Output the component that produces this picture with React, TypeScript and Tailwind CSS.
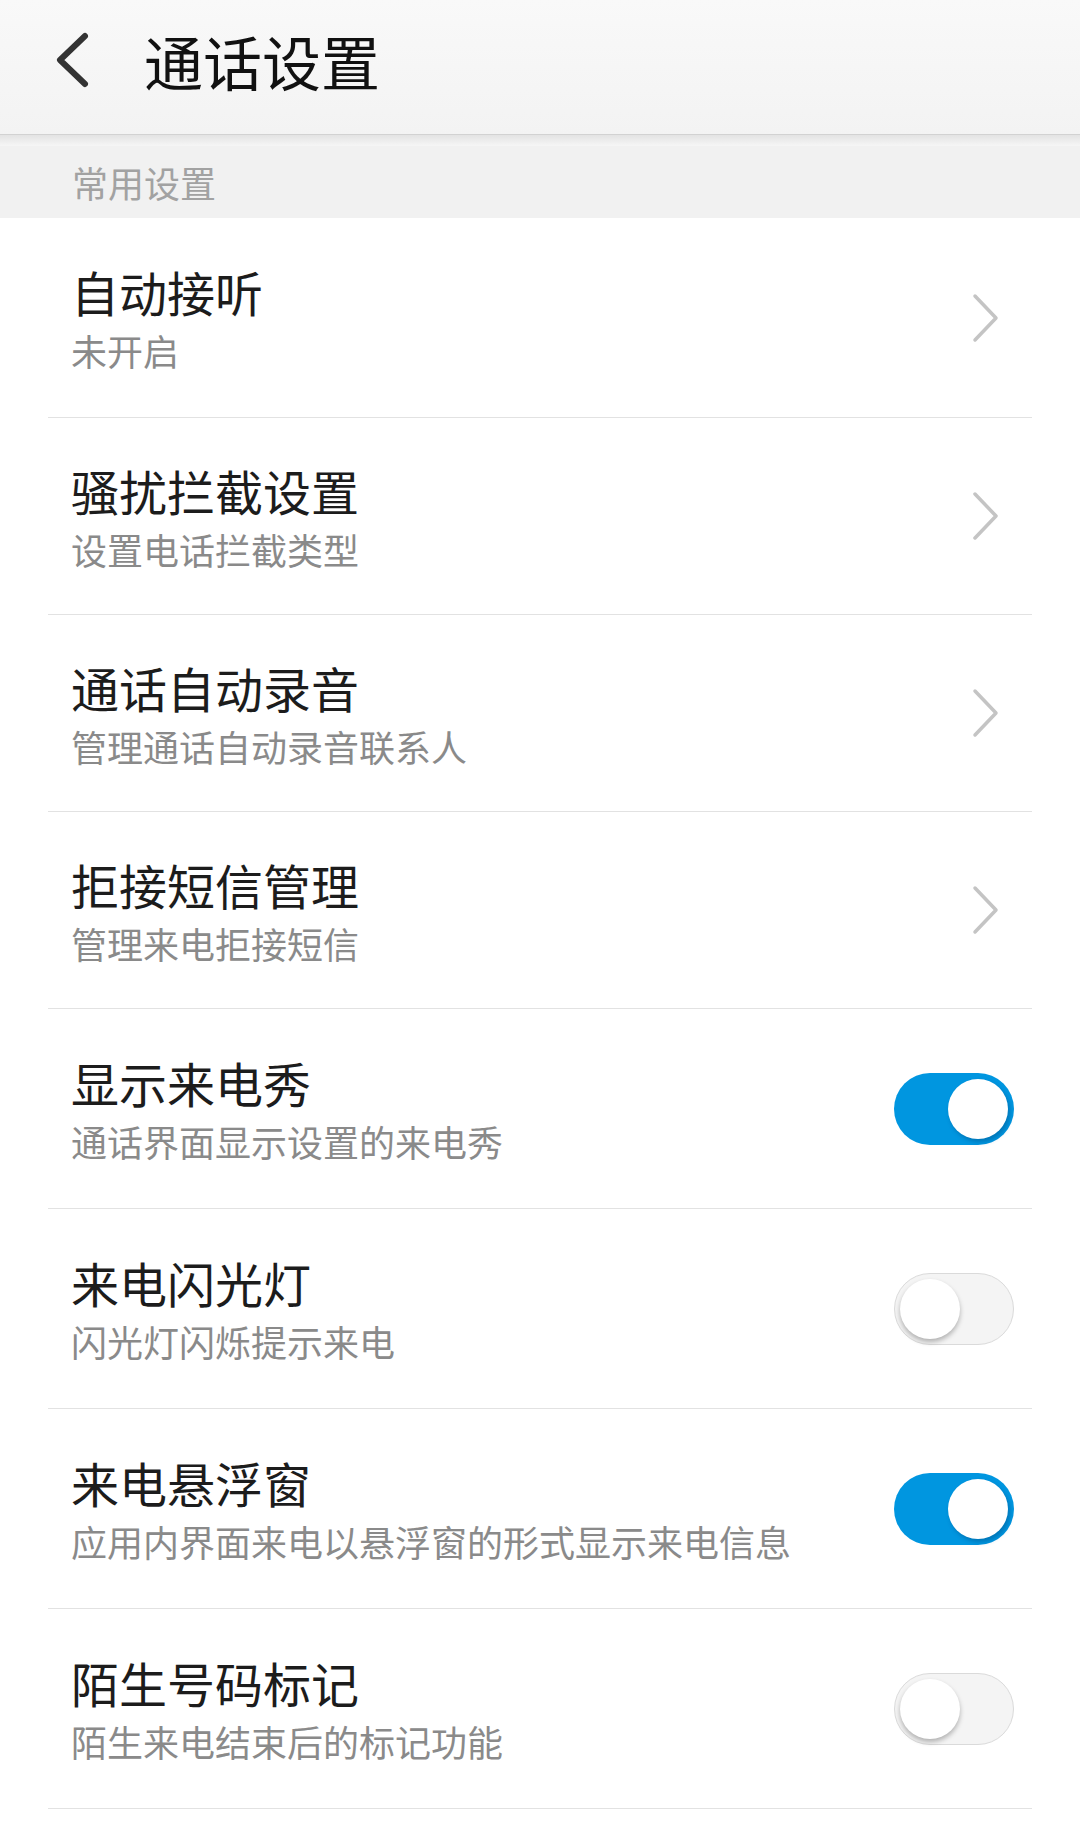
import React from "react";

type Item = {
  title: string;
  desc: string;
  kind: "link" | "toggle";
  on?: boolean;
};

const items: Item[] = [
  { title: "自动接听", desc: "未开启", kind: "link" },
  { title: "骚扰拦截设置", desc: "设置电话拦截类型", kind: "link" },
  { title: "通话自动录音", desc: "管理通话自动录音联系人", kind: "link" },
  { title: "拒接短信管理", desc: "管理来电拒接短信", kind: "link" },
  { title: "显示来电秀", desc: "通话界面显示设置的来电秀", kind: "toggle", on: true },
  { title: "来电闪光灯", desc: "闪光灯闪烁提示来电", kind: "toggle", on: false },
  { title: "来电悬浮窗", desc: "应用内界面来电以悬浮窗的形式显示来电信息", kind: "toggle", on: true },
  { title: "陌生号码标记", desc: "陌生来电结束后的标记功能", kind: "toggle", on: false },
];

function Chevron() {
  return (
    <svg width="30" height="50" viewBox="0 0 30 50" className="mr-[80px]">
      <path d="M5 3 L26 25 L5 47" fill="none" stroke="#c4c4c4" strokeWidth="3.5" strokeLinecap="round" strokeLinejoin="round" />
    </svg>
  );
}

function Toggle({ on }: { on: boolean }) {
  if (on) {
    return (
      <div className="mr-[66px] flex h-[72px] w-[120px] items-center justify-end rounded-full bg-[#0096e0] pr-[6px]">
        <div className="h-[60px] w-[60px] rounded-full bg-white shadow-[2px_3px_4px_rgba(0,60,110,0.35)]" />
      </div>
    );
  }
  return (
    <div className="mr-[66px] flex h-[72px] w-[120px] items-center rounded-full border border-[#dadada] bg-[#f4f4f4] pl-[5px]">
      <div className="h-[60px] w-[60px] rounded-full bg-white shadow-[0_3px_5px_rgba(0,0,0,0.28)]" />
    </div>
  );
}

export default function App() {
  return (
    <div
      className="min-h-[1834px] w-[1080px] bg-white"
      style={{ fontFamily: '"Noto Sans CJK SC", "Noto Sans", sans-serif' }}
    >
      {/* Top bar */}
      <header className="flex h-[135px] items-center border-b border-[#d2d2d2] bg-gradient-to-b from-[#f9f9f9] to-[#f3f3f3] pb-[14px]">
        <svg width="44" height="60" viewBox="0 0 44 60" className="ml-[50px]">
          <path d="M35 6 L10 30 L35 54" fill="none" stroke="#333333" strokeWidth="6" strokeLinecap="round" strokeLinejoin="round" />
        </svg>
        <h1 className="ml-[50px] text-[59px] leading-none font-normal text-[#111111]">通话设置</h1>
      </header>
      <div className="h-[11px] bg-gradient-to-b from-[#e3e3e3] to-[#f6f6f6]" />

      {/* Section header */}
      <div className="flex h-[72px] items-center bg-[#f1f1f1] pl-[72px]">
        <span className="text-[36px] leading-none text-[#a2a2a2]">常用设置</span>
      </div>

      {/* Rows */}
      <div>
        {items.map((item, i) => (
          <div key={item.title}>
            <div
              className={`flex items-center justify-between pl-[71px] ${
                i === 0 ? "h-[199px]" : item.kind === "link" ? "h-[196px]" : "h-[199px]"
              }`}
            >
              <div className="flex flex-col">
                <span className="text-[48px] leading-[56px] text-[#1c1c1c]">{item.title}</span>
                <span className="mt-[9px] text-[36px] leading-[44px] text-[#8a8a8a]">{item.desc}</span>
              </div>
              {item.kind === "link" ? <Chevron /> : <Toggle on={!!item.on} />}
            </div>
            <div className="mx-[48px] h-px bg-[#e2e2e2]" />
          </div>
        ))}
      </div>
    </div>
  );
}
